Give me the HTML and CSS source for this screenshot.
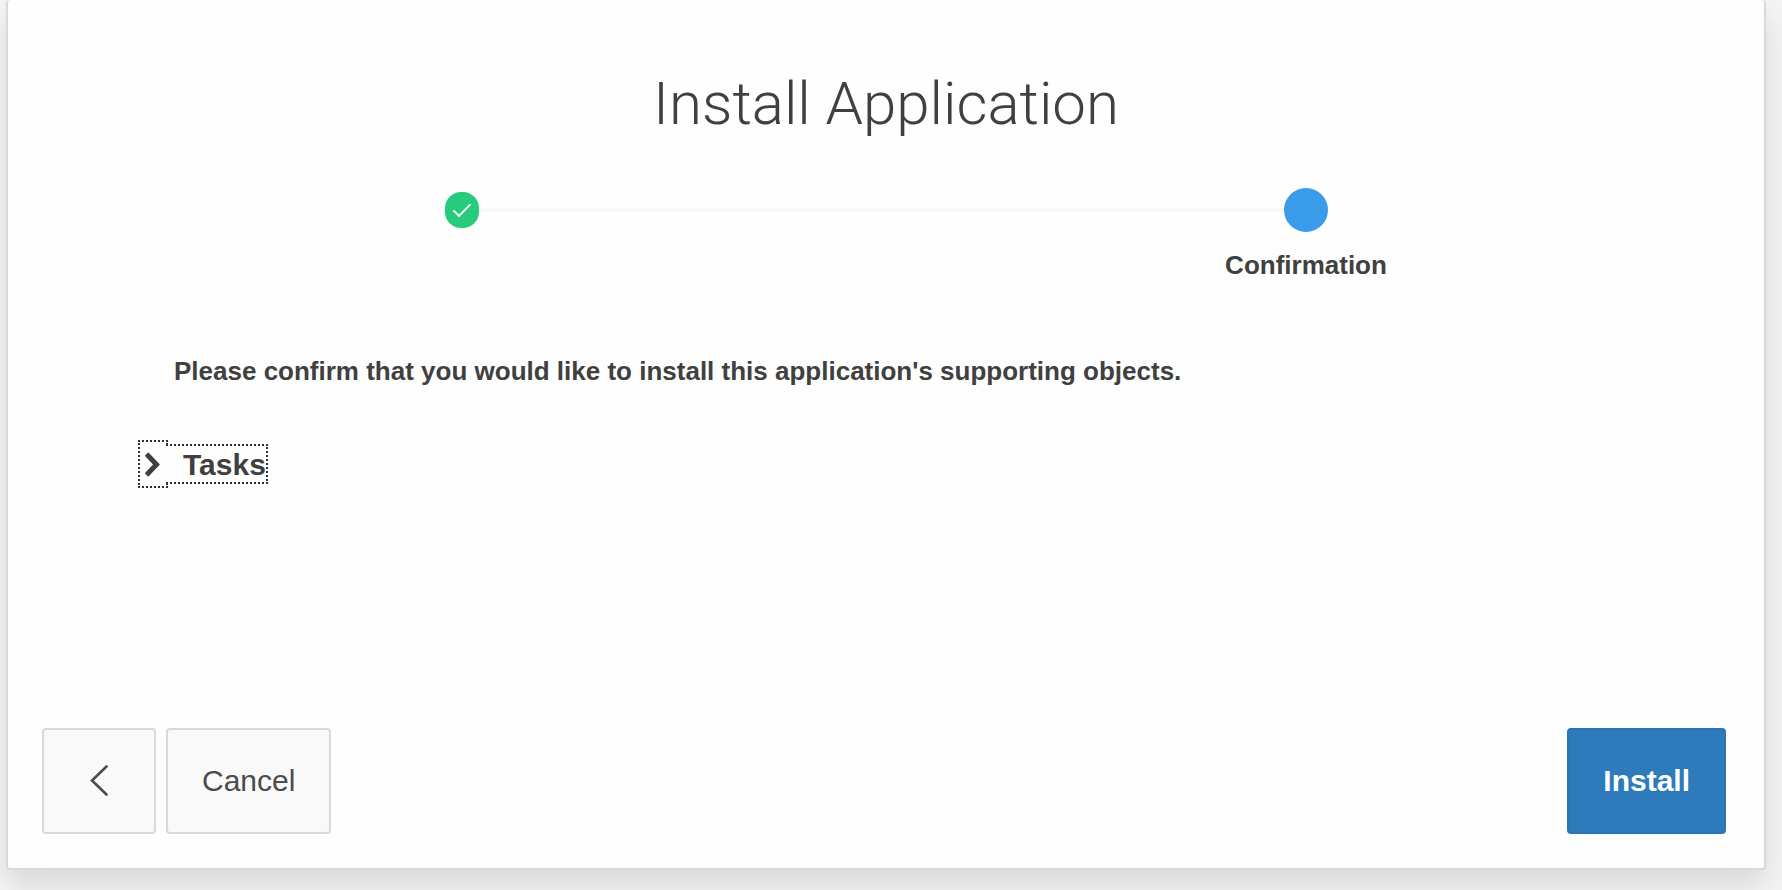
FILE: index.html
```html
<!DOCTYPE html>
<html lang="en">
<head>
<meta charset="utf-8">
<title>Install Application</title>
<link rel="stylesheet" href="styles.css">
</head>
<body>
<main class="wizard">
  <h1 class="wizard-title">Install Application</h1>
  <ol class="steps">
    <li class="step">
      <span class="step-marker">
        <span class="step-done">
          <svg width="18" height="14" viewBox="0 0 18 14" fill="none" stroke="#fff" stroke-width="1.8" aria-label="Completed"><path d="M.5 7.5 6 13 17.5 1.200"/></svg>
        </span>
      </span>
    </li>
    <li class="step">
      <span class="step-marker"><span class="step-current"></span></span>
      <span class="step-label">Confirmation</span>
    </li>
  </ol>
  <section class="wizard-body">
    <p class="message">Please confirm that you would like to install this application's supporting objects.</p>
    <h2 class="tasks">
      <button class="tasks-toggle" type="button" aria-expanded="false">
        <span class="tasks-icon">
          <svg width="16" height="26" viewBox="0 0 16 26" fill="none" stroke="#404040" stroke-width="5"><path d="M1.500 3 11.500 13.500 1.500 24"/></svg>
        </span>
        <span class="tasks-label">Tasks</span>
      </button>
    </h2>
  </section>
  <footer class="actions">
    <button class="button button-back" type="button" aria-label="Back">
      <svg width="18" height="32" viewBox="0 0 18 32" fill="none" stroke="#4b4b4b" stroke-width="2.600" stroke-linecap="round"><path d="M16.500 1.500 2 15.500 16.500 29.500"/></svg>
    </button>
    <button class="button" type="button">Cancel</button>
    <button class="button button-primary" type="button">Install</button>
  </footer>
</main>
</body>
</html>
```
FILE: styles.css
```css
* {
  box-sizing: border-box;
}

body {
  margin: 0;
  min-height: 100vh;
  padding: 0 16px 20px 6px;
  display: flex;
  background: #f5f5f5;
  color: #404040;
  font-family: "Liberation Sans", Arial, sans-serif;
  overflow: hidden;
}

.wizard {
  flex: 1;
  display: flex;
  flex-direction: column;
  border: 2px solid #d9d9d9;
  border-top: 0;
  border-radius: 4px;
  background: #fefefe;
  box-shadow: 0 16px 32px rgba(0, 0, 0, 0.12);
}

.wizard-title {
  margin: 68px 0 0;
  font-family: Roboto, "Liberation Sans", sans-serif;
  font-size: 60px;
  font-weight: 300;
  line-height: 72px;
  text-align: center;
}

.steps {
  display: grid;
  grid-template-columns: 1fr 1fr;
  margin: 46px 36px 0 32px;
  padding: 0;
  list-style: none;
}

.step {
  display: flex;
  flex-direction: column;
  align-items: center;
}

.step-marker {
  width: 100%;
  height: 48px;
  display: flex;
  align-items: center;
  justify-content: center;
}

.step-marker::before,
.step-marker::after {
  content: "";
  flex: 1;
  height: 4px;
}

.step:not(:last-child) .step-marker::after,
.step:not(:first-child) .step-marker::before {
  background: #f8f8f8;
}

.step-done {
  width: 34px;
  height: 36px;
  display: flex;
  align-items: center;
  justify-content: center;
  border-radius: 16px;
  background: #26cb7c;
}

.step-current {
  width: 44px;
  height: 44px;
  border-radius: 50%;
  background: #3a9bea;
}

.step-label {
  margin-top: 16px;
  font-size: 26px;
  font-weight: bold;
  line-height: 30px;
}

.wizard-body {
  flex: 1;
  padding: 73px 130px 24px;
}

.message {
  margin: 0 0 0 36px;
  font-size: 26px;
  font-weight: bold;
  line-height: 36px;
}

.tasks {
  margin: 51px 0 0;
}

.tasks-toggle {
  display: flex;
  align-items: center;
  padding: 0;
  border: 0;
  background: none;
  color: inherit;
  font: bold 30px/34px "Liberation Sans", Arial, sans-serif;
}

.tasks-icon {
  width: 30px;
  height: 48px;
  display: flex;
  align-items: center;
  justify-content: center;
  border: 2px dotted #303030;
}

.tasks-label {
  position: relative;
  margin-left: -2px;
  padding: 2px 0 0 17px;
  border: 2px dotted #303030;
  border-left: 0;
  background: #fefefe;
}

.actions {
  display: flex;
  gap: 10px;
  padding: 0 38px 34px 34px;
}

.button {
  height: 106px;
  padding: 0 34px;
  display: flex;
  align-items: center;
  justify-content: center;
  border: 2px solid #d9d9d9;
  border-radius: 4px;
  background: #f9f9f9;
  color: #4b4b4b;
  font: 30px/36px "Liberation Sans", Arial, sans-serif;
}

.button-back {
  padding: 0 46px;
}

.button-primary {
  margin-left: auto;
  border-color: #2a76b5;
  background: #2d7bbb;
  color: #fff;
  font-weight: bold;
}
```
